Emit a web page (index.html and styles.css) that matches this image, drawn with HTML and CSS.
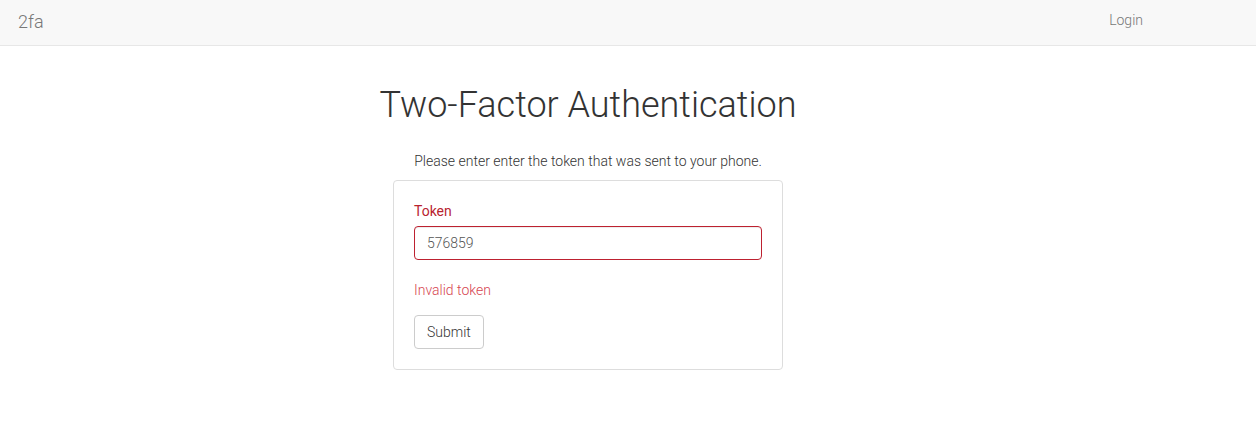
FILE: index.html
```html
<!DOCTYPE html>
<html>
<head>
<meta charset="utf-8">
<title>2fa</title>
<link rel="stylesheet" href="styles.css">
</head>
<body>
<nav class="navbar">
  <a class="brand" href="#">2fa</a>
  <a class="nav-link" href="#">Login</a>
</nav>
<main class="content">
  <h1 class="title">Two-Factor Authentication</h1>
  <p class="intro">Please enter enter the token that was sent to your phone.</p>
  <form class="card">
    <label class="label" for="token">Token</label>
    <input class="input" id="token" type="text" value="576859">
    <p class="error">Invalid token</p>
    <button class="btn" type="button">Submit</button>
  </form>
</main>
</body>
</html>
```
FILE: styles.css
```css
* { box-sizing: border-box; }
html, body { margin: 0; padding: 0; }
body {
  font-family: Roboto, "Helvetica Neue", Arial, sans-serif;
  font-size: 14px;
  font-weight: 300;
  line-height: 1.42857;
  color: #333;
  background: #fff;
}
.navbar {
  height: 46px;
  background: #f8f8f8;
  border-bottom: 1px solid #e7e7e7;
  display: flex;
  align-items: center;
  justify-content: space-between;
  padding: 0 113px 0 18px;
}
.brand {
  font-size: 18px;
  color: #777;
  text-decoration: none;
  line-height: 20px;
  margin-top: -2px;
}
.nav-link {
  font-size: 14px;
  color: #777;
  text-decoration: none;
  margin-top: -4px;
}
.content {
  width: 390px;
  margin-left: 393px;
  display: flex;
  flex-direction: column;
  align-items: center;
}
.title {
  font-size: 36px;
  font-weight: 300;
  line-height: 1.1;
  margin: 40px -60px 0;
  white-space: nowrap;
}
.intro {
  margin: 25px 0 0;
  font-size: 14px;
  line-height: 20px;
}
.card {
  align-self: stretch;
  margin-top: 9px;
  border: 1px solid #ddd;
  border-radius: 4px;
  padding: 20px 20px 20px;
  display: flex;
  flex-direction: column;
  align-items: flex-start;
}
.label {
  color: #b8232f;
  font-weight: 400;
  font-size: 14px;
  line-height: 20px;
  margin: 0 0 5px;
}
.input {
  width: 100%;
  height: 34px;
  border: 1px solid #bd2130;
  border-radius: 4px;
  padding: 6px 12px;
  font-family: inherit;
  font-size: 14px;
  font-weight: 300;
  color: #555;
  box-shadow: inset 0 1px 1px rgba(0,0,0,.075);
  outline: none;
}
.error {
  color: #d64550;
  margin: 20px 0 0;
  line-height: 20px;
}
.btn {
  margin-top: 15px;
  height: 34px;
  padding: 6px 12px;
  font-family: inherit;
  font-size: 14px;
  font-weight: 300;
  color: #333;
  background: #fff;
  border: 1px solid #ccc;
  border-radius: 4px;
}
```
